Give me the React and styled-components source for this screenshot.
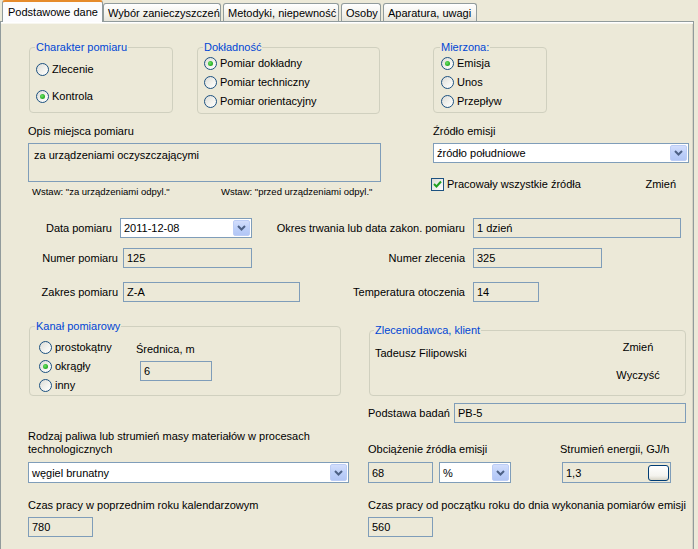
import React from "react";
import styled, { createGlobalStyle } from "styled-components";

const FONT = `"Liberation Sans", Arial, sans-serif`;

const GlobalStyle = createGlobalStyle`
  html, body {
    margin: 0;
    padding: 0;
    background: #ece9d8;
  }
  body {
    font-family: ${FONT};
    font-size: 11px;
    color: #000;
  }
`;

const Window = styled.div`
  width: 698px;
  height: 549px;
  overflow: hidden;
  background: #ece9d8;
`;

const TabStrip = styled.div`
  display: flex;
  align-items: flex-end;
  height: 21px;
  padding-left: 2px;
`;

const Tab = styled.div`
  box-sizing: border-box;
  position: relative;
  z-index: ${(p) => (p.$active ? 2 : 1)};
  width: ${(p) => p.$w}px;
  margin-left: ${(p) => p.$ml || 0}px;
  height: ${(p) => (p.$active ? 22 : 18)}px;
  margin-bottom: ${(p) => (p.$active ? -1 : 0)}px;
  display: flex;
  align-items: center;
  padding: ${(p) => (p.$active ? "0 0 1px 5px" : "1px 0 0 4px")};
  border: 1px solid #919b9c;
  border-bottom: none;
  border-top: ${(p) => (p.$active ? "2px solid #e68b2c" : "1px solid #919b9c")};
  border-radius: 3px 3px 0 0;
  background: ${(p) =>
    p.$active ? "#fcfcfe" : "linear-gradient(#ffffff, #f3f2ec 60%, #e6e4da)"};
  white-space: nowrap;
  font-size: 11px;
`;

const Panel = styled.div`
  box-sizing: border-box;
  width: 694px;
  height: 540px;
  border: 1px solid #919b9c;
  box-shadow: inset 0 1px 0 #ffffff, inset 0 2px 0 #f7f6f0, inset -1px 0 0 #d6d3c4;
  background: #ece9d8;
`;

/* ---------- group boxes ---------- */

const GroupsRow = styled.div`
  display: flex;
  align-items: flex-start;
  margin-top: ${(p) => p.$mt}px;
  padding-left: 28px;
`;

const Group = styled.fieldset`
  box-sizing: border-box;
  margin: ${(p) => p.$mt || 0}px 0 0 ${(p) => p.$ml || 0}px;
  width: ${(p) => p.$w}px;
  height: ${(p) => p.$h}px;
  min-width: 0;
  padding: 0 0 0 ${(p) => p.$pl}px;
  border: 1px solid #d0d0bf;
  border-radius: 4px;
`;

const Legend = styled.legend`
  padding: 0 1px;
  margin-left: -1px;
  color: #0046d5;
  line-height: 14px;
  font-size: 11px;
`;

const RadioList = styled.div`
  display: flex;
  flex-direction: column;
  gap: ${(p) => p.$gap}px;
  padding-top: ${(p) => p.$pt}px;
`;

const RadioItem = styled.div`
  display: flex;
  align-items: center;
  height: 16px;
  white-space: nowrap;
`;

const RadioMark = styled.span`
  box-sizing: border-box;
  width: 13px;
  height: 13px;
  margin-right: 3px;
  border: 1px solid #1c5180;
  border-radius: 50%;
  background: linear-gradient(135deg, #dcdcd7 0%, #f4f4f0 60%, #ffffff 100%);
  display: flex;
  align-items: center;
  justify-content: center;
  flex: none;

  &::after {
    content: "";
    display: ${(p) => (p.$checked ? "block" : "none")};
    width: 5px;
    height: 5px;
    border-radius: 50%;
    background: radial-gradient(circle at 40% 40%, #6fe36b 0%, #2fb52b 55%, #1f8f1f 100%);
  }
`;

const Radio = ({ checked, children }) => (
  <RadioItem>
    <RadioMark $checked={checked} />
    {children}
  </RadioItem>
);

/* ---------- generic bits ---------- */

const Row = styled.div`
  display: flex;
  align-items: ${(p) => p.$align || "flex-start"};
  margin-top: ${(p) => p.$mt || 0}px;
  padding-left: ${(p) => p.$pl || 0}px;
`;

const Column = styled.div`
  display: flex;
  flex-direction: column;
  width: ${(p) => (p.$w ? `${p.$w}px` : "auto")};
  margin-left: ${(p) => p.$ml || 0}px;
  flex: none;
`;

const Text = styled.div`
  line-height: 14px;
  white-space: nowrap;
  width: ${(p) => (p.$w ? `${p.$w}px` : "auto")};
  text-align: ${(p) => p.$align || "left"};
  margin-top: ${(p) => p.$mt || 0}px;
  flex: none;
`;

const LabelCell = styled.div`
  height: 26px;
  display: flex;
  align-items: flex-end;
  line-height: 13px;
`;

const Field = styled.div`
  box-sizing: border-box;
  width: ${(p) => p.$w}px;
  height: ${(p) => p.$h || 20}px;
  margin-left: ${(p) => p.$ml || 0}px;
  margin-top: ${(p) => p.$mt || 0}px;
  border: 1px solid #7f9db9;
  background: #ece9d8;
  padding: ${(p) => (p.$multi ? "5px 5px" : "0 3px")};
  display: flex;
  align-items: ${(p) => (p.$multi ? "flex-start" : "center")};
  white-space: nowrap;
  flex: none;
`;

const ComboBox = styled.div`
  box-sizing: border-box;
  width: ${(p) => p.$w}px;
  height: ${(p) => p.$h || 20}px;
  margin-left: ${(p) => p.$ml || 0}px;
  margin-top: ${(p) => p.$mt || 0}px;
  border: 1px solid #7f9db9;
  background: #ffffff;
  display: flex;
  flex: none;
  padding: 1px;
`;

const ComboText = styled.div`
  flex: 1;
  display: flex;
  align-items: center;
  padding-left: 2px;
  white-space: nowrap;
`;

const ComboButton = styled.div`
  box-sizing: border-box;
  width: 17px;
  border: 1px solid #bccdf6;
  border-radius: 2px;
  background: linear-gradient(#d3defc, #bccff9 55%, #b2c6f5);
  display: flex;
  align-items: center;
  justify-content: center;
`;

const Chevron = () => (
  <svg width="9" height="6" viewBox="0 0 9 6">
    <path d="M1 1 L4.5 4.5 L8 1" fill="none" stroke="#4d6185" strokeWidth="2" />
  </svg>
);

const Combo = ({ value, ...rest }) => (
  <ComboBox {...rest}>
    <ComboText>{value}</ComboText>
    <ComboButton>
      <Chevron />
    </ComboButton>
  </ComboBox>
);

const InlineButton = styled.div`
  box-sizing: border-box;
  width: 21px;
  height: 16px;
  margin-left: auto;
  margin-right: -2px;
  border: 1px solid #003c74;
  border-radius: 3px;
  background: linear-gradient(#ffffff, #f4f3ee 70%, #d8d5c8);
`;

const CheckMark = styled.span`
  box-sizing: border-box;
  width: 13px;
  height: 13px;
  margin-left: -2px;
  margin-right: 3px;
  border: 1px solid #1c5180;
  background: linear-gradient(135deg, #dcdcd7, #ffffff);
  display: flex;
  align-items: center;
  justify-content: center;
  flex: none;
`;

const LinkText = styled.div`
  font-size: 9.5px;
  line-height: 12px;
  white-space: nowrap;
  width: ${(p) => (p.$w ? `${p.$w}px` : "auto")};
  flex: none;
`;

const FlatButton = styled.div`
  line-height: 14px;
  text-align: center;
  white-space: nowrap;
  margin-left: ${(p) => (p.$push ? "auto" : "0")};
  margin-right: ${(p) => p.$mr || 0}px;
`;

const ButtonColumn = styled.div`
  display: flex;
  flex-direction: column;
  gap: 14px;
  width: 60px;
  margin-left: auto;
  margin-right: 17px;
  padding-top: 3px;
`;

export default function App() {
  return (
    <Window>
      <GlobalStyle />
      <TabStrip>
        <Tab $active $w={101}>Podstawowe dane</Tab>
        <Tab $w={118}>Wybór zanieczyszczeń</Tab>
        <Tab $w={116} $ml={2}>Metodyki, niepewność</Tab>
        <Tab $w={40} $ml={2}>Osoby</Tab>
        <Tab $w={94} $ml={2}>Aparatura, uwagi</Tab>
      </TabStrip>

      <Panel>
        {/* groups with options */}
        <GroupsRow $mt={18}>
          <Group $w={144} $h={73} $pl={6}>
            <Legend>Charakter pomiaru</Legend>
            <RadioList $pt={7} $gap={11}>
              <Radio>Zlecenie</Radio>
              <Radio checked>Kontrola</Radio>
            </RadioList>
          </Group>
          <Group $w={183} $h={74} $pl={6} $ml={24}>
            <Legend>Dokładność</Legend>
            <RadioList $pt={1} $gap={3}>
              <Radio checked>Pomiar dokładny</Radio>
              <Radio>Pomiar techniczny</Radio>
              <Radio>Pomiar orientacyjny</Radio>
            </RadioList>
          </Group>
          <Group $w={114} $h={73} $pl={7} $ml={53}>
            <Legend>Mierzona:</Legend>
            <RadioList $pt={1} $gap={3}>
              <Radio checked>Emisja</Radio>
              <Radio>Unos</Radio>
              <Radio>Przepływ</Radio>
            </RadioList>
          </Group>
        </GroupsRow>

        {/* place description and emission source */}
        <Row $mt={10} $pl={27}>
          <Column $w={353}>
            <Text>Opis miejsca pomiaru</Text>
            <Field $w={353} $h={39} $mt={5} $multi>
              za urządzeniami oczyszczającymi
            </Field>
            <Row $mt={4} $pl={4}>
              <LinkText $w={189}>Wstaw: "za urządzeniami odpyl."</LinkText>
              <LinkText>Wstaw: "przed urządzeniami odpyl."</LinkText>
            </Row>
          </Column>
          <Column $w={256} $ml={52}>
            <Text>Źródło emisji</Text>
            <Combo $w={256} $mt={5} value="źródło południowe" />
            <Row $mt={14} $align="center">
              <CheckMark>
                <svg width="9" height="9" viewBox="0 0 9 9">
                  <path d="M1 4 L3.5 6.5 L8 1.5" fill="none" stroke="#21a121" strokeWidth="2" />
                </svg>
              </CheckMark>
              <Text>Pracowały wszystkie źródła</Text>
              <FlatButton $push $mr={13}>Zmień</FlatButton>
            </Row>
          </Column>
        </Row>

        {/* dates and numbers */}
        <Row $mt={20} $align="center">
          <Text $w={111} $align="right">Data pomiaru</Text>
          <Combo $w={132} $ml={8} value="2011-12-08" />
          <Text $w={213} $align="right">Okres trwania lub data zakon. pomiaru</Text>
          <Field $w={208} $ml={8}>1 dzień</Field>
        </Row>
        <Row $mt={10} $align="center">
          <Text $w={117} $align="right">Numer pomiaru</Text>
          <Field $w={129} $ml={5}>125</Field>
          <Text $w={213} $align="right">Numer zlecenia</Text>
          <Field $w={129} $ml={8}>325</Field>
        </Row>
        <Row $mt={14} $align="center">
          <Text $w={117} $align="right">Zakres pomiaru</Text>
          <Field $w={177} $ml={5}>Z-A</Field>
          <Text $w={165} $align="right">Temperatura otoczenia</Text>
          <Field $w={66} $ml={8}>14</Field>
        </Row>

        {/* duct and client */}
        <Row $mt={17} $pl={28}>
          <Group $w={312} $h={77} $pl={6}>
            <Legend>Kanał pomiarowy</Legend>
            <Row $pl={3}>
              <Column $w={97}>
                <RadioList $pt={6} $gap={3}>
                  <Radio>prostokątny</Radio>
                  <Radio checked>okrągły</Radio>
                  <Radio>inny</Radio>
                </RadioList>
              </Column>
              <Column>
                <Text $mt={9}>Średnica, m</Text>
                <Field $w={72} $ml={4} $mt={5}>6</Field>
              </Column>
            </Row>
          </Group>
          <Group $w={317} $h={73} $pl={5} $ml={28} $mt={4}>
            <Legend>Zleceniodawca, klient</Legend>
            <Row>
              <Text $mt={9}>Tadeusz Filipowski</Text>
              <ButtonColumn>
                <FlatButton>Zmień</FlatButton>
                <FlatButton>Wyczyść</FlatButton>
              </ButtonColumn>
            </Row>
          </Group>
        </Row>
        <Row $mt={7} $pl={367} $align="center">
          <Text $w={79}>Podstawa badań</Text>
          <Field $w={232} $ml={7}>PB-5</Field>
        </Row>

        {/* fuel, load, energy */}
        <Row $mt={7} $pl={27}>
          <Column $w={321}>
            <LabelCell>
              Rodzaj paliwa lub strumień masy materiałów w procesach
              <br />
              technologicznych
            </LabelCell>
            <Combo $w={321} $h={21} $mt={6} value="węgiel brunatny" />
          </Column>
          <Column $w={192} $ml={19}>
            <LabelCell>Obciążenie źródła emisji</LabelCell>
            <Row $mt={6}>
              <Field $w={65} $h={21}>68</Field>
              <Combo $w={72} $h={21} $ml={6} value="%" />
            </Row>
          </Column>
          <Column>
            <LabelCell>Strumień energii, GJ/h</LabelCell>
            <Field $w={109} $h={21} $ml={2} $mt={6}>
              1,3
              <InlineButton />
            </Field>
          </Column>
        </Row>

        {/* working time */}
        <Row $mt={15} $pl={27}>
          <Column $w={340}>
            <Text>Czas pracy w poprzednim roku kalendarzowym</Text>
            <Field $w={65} $mt={5}>780</Field>
          </Column>
          <Column>
            <Text>Czas pracy od początku roku do dnia wykonania pomiarów emisji</Text>
            <Field $w={65} $mt={5}>560</Field>
          </Column>
        </Row>
      </Panel>
    </Window>
  );
}
